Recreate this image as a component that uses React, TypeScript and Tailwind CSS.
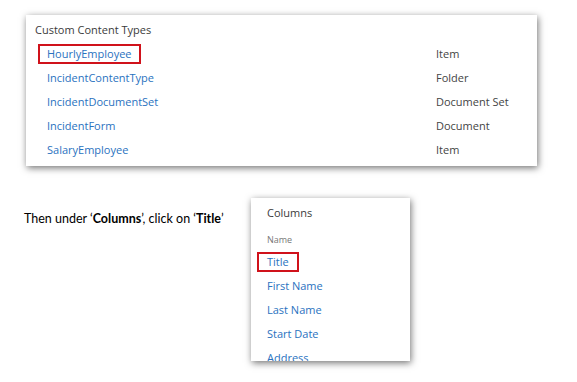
const types = [
  { name: "HourlyEmployee", parent: "Item", boxed: true },
  { name: "IncidentContentType", parent: "Folder" },
  { name: "IncidentDocumentSet", parent: "Document Set" },
  { name: "IncidentForm", parent: "Document" },
  { name: "SalaryEmployee", parent: "Item" },
];

const columns = ["Title", "First Name", "Last Name", "Start Date", "Address"];

const font = { fontFamily: '"Open Sans", "Segoe UI", sans-serif' };

export default function App() {
  return (
    <div className="w-[577px] h-[382px] bg-white overflow-hidden" style={font}>
      <div className="ml-[26px] mt-[15px] w-[511px] h-[151px] bg-white shadow-[1px_2px_7px_rgba(0,0,0,0.55)] pt-[3px]">
        <div className="pl-[9px] h-[24px] flex items-center text-[11px] text-[#3b3b3b]">
          Custom Content Types
        </div>
        {types.map((t) => (
          <div key={t.name} className="flex items-center h-[24px] text-[11px]">
            <div className="w-[410px] pl-[12px]">
              <span
                className={
                  t.boxed
                    ? "inline-block border-2 border-[#d0121b] px-[7px] leading-[16px] text-[#2a72c0]"
                    : "inline-block px-[9px] leading-[16px] text-[#2a72c0]"
                }
              >
                {t.name}
              </span>
            </div>
            <div className="text-[#444]">{t.parent}</div>
          </div>
        ))}
      </div>

      <div className="flex mt-[32px]">
        <div
          className="w-[251px] shrink-0 pl-[24px] pt-[12px] text-[12.5px] text-black"
          style={{ fontFamily: 'Lato, "Liberation Sans", sans-serif' }}
        >
          Then under ‘<b>Columns</b>’, click on ‘<b>Title</b>’
        </div>
        {/* panel is cropped at the bottom, so "Address" is cut off on purpose */}
        <div className="w-[159px] h-[163px] shrink-0 bg-white shadow-[1px_2px_7px_rgba(0,0,0,0.55)] overflow-hidden pt-[4px]">
          <div className="pl-[16px] h-[22px] flex items-center text-[11px] text-[#3b3b3b]">Columns</div>
          <div className="pl-[16px] h-[26px] pt-[9px] leading-[14px] text-[9px] text-[#777]">Name</div>
          {columns.map((c, i) => (
            <div key={c} className="h-[24px] flex items-center pl-[6px] text-[11px] text-[#2a72c0]">
              <span
                className={
                  i === 0
                    ? "inline-block border-2 border-[#d0121b] px-[8px] leading-[16px]"
                    : "inline-block px-[10px] leading-[16px]"
                }
              >
                {c}
              </span>
            </div>
          ))}
        </div>
      </div>
    </div>
  );
}
